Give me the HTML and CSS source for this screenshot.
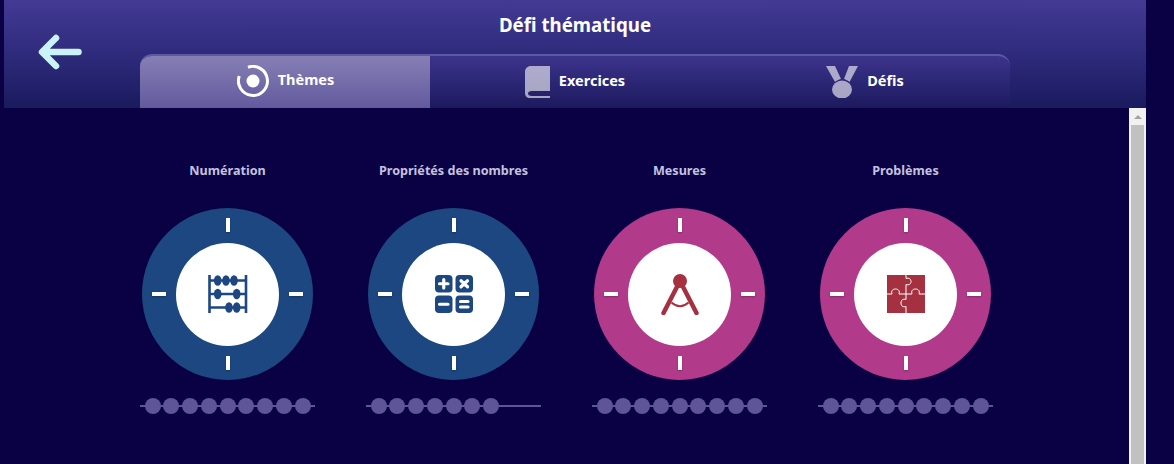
FILE: index.html

```html
<!DOCTYPE html>
<html lang="fr">
<head>
  <meta charset="UTF-8" />
  <title>Défi thématique</title>
  <link rel="stylesheet" href="styles.css">
</head>
<body>
  <div class="page">
    <header class="header">
      <a class="back" href="#" aria-label="Retour">
        <svg width="48" height="38" viewBox="0 0 48 38">
          <path d="M42.500 18H7M20 4L6 18l14 14" fill="none" stroke="#c9f3f8" stroke-width="6.500" stroke-linecap="round" stroke-linejoin="round"/>
        </svg>
      </a>
      <h1 class="title">Défi thématique</h1>
      <nav class="tabs">
        <a class="tab active" href="#">
          <svg width="32" height="32" viewBox="0 0 32 32">
            <path d="M11 2.300A14.500 14.500 0 1 1 2.300 11" fill="none" stroke="#fff" stroke-width="3"/>
            <circle cx="16" cy="16" r="6.500" fill="#fff"/>
          </svg>
          <span>Thèmes</span>
        </a>
        <a class="tab" href="#">
          <svg class="dim" width="25" height="32" viewBox="0 0 25 32">
            <path d="M6 0H25V25H6.500C4.500 25 3 26 3 27.500S4.500 30 6.500 30H25V32H5C2 32 0 30 0 27V6C0 2.500 2.500 0 6 0Z" fill="#fff"/>
          </svg>
          <span>Exercices</span>
        </a>
        <a class="tab" href="#">
          <svg class="dim" width="32" height="32" viewBox="0 0 32 32">
            <path d="M0 0H9L15 13C12.500 13.500 10.500 14.500 9 16ZM32 0H23L18 13C20 13.500 22 14.500 23.500 16Z" fill="#fff"/>
            <ellipse cx="16" cy="23.500" rx="10" ry="9" fill="#fff"/>
          </svg>
          <span>Défis</span>
        </a>
      </nav>
    </header>

    <div class="content">
      <main class="themes">
        <section class="theme">
          <h2>Numération</h2>
          <div class="dial blue">
            <i class="tick top"></i><i class="tick bottom"></i><i class="tick left"></i><i class="tick right"></i>
            <div class="hub">
              <svg width="40" height="38" viewBox="0 0 40 38" fill="#1c4780">
                <path d="M1.500 0V38M38 0V38M1 5.500H38.500M1 19H38.500M1 32.500H38.500" fill="none" stroke="#1c4780" stroke-width="2.600"/>
                <ellipse cx="9.700" cy="5.500" rx="3.800" ry="5.300"/><ellipse cx="18" cy="5.500" rx="3.800" ry="5.300"/><ellipse cx="26" cy="5.500" rx="3.800" ry="5.300"/>
                <ellipse cx="9.700" cy="19" rx="3.800" ry="5.300"/><ellipse cx="28.700" cy="19" rx="3.800" ry="5.300"/>
                <ellipse cx="21" cy="32.500" rx="3.800" ry="5.300"/><ellipse cx="28.700" cy="32.500" rx="3.800" ry="5.300"/>
              </svg>
            </div>
          </div>
          <div class="progress"><b></b><b></b><b></b><b></b><b></b><b></b><b></b><b></b><b></b></div>
        </section>

        <section class="theme">
          <h2>Propriétés des nombres</h2>
          <div class="dial blue">
            <i class="tick top"></i><i class="tick bottom"></i><i class="tick left"></i><i class="tick right"></i>
            <div class="hub">
              <svg width="38" height="38" viewBox="0 0 38 38">
                <rect width="17.500" height="17.500" rx="4" fill="#1c4780"/>
                <rect x="20.500" width="17.500" height="17.500" rx="4" fill="#1c4780"/>
                <rect y="20.500" width="17.500" height="17.500" rx="4" fill="#1c4780"/>
                <rect x="20.500" y="20.500" width="17.500" height="17.500" rx="4" fill="#1c4780"/>
                <path d="M4.500 8.750H13M8.750 4.500V13M26 5.800L32.500 11.800M32.500 5.800L26 11.800M4.500 29.250H13M25.500 26.500H33M25.500 32H33" fill="none" stroke="#fff" stroke-width="3.200" stroke-linecap="round"/>
              </svg>
            </div>
          </div>
          <div class="progress"><b></b><b></b><b></b><b></b><b></b><b></b><b></b></div>
        </section>

        <section class="theme">
          <h2>Mesures</h2>
          <div class="dial pink">
            <i class="tick top"></i><i class="tick bottom"></i><i class="tick left"></i><i class="tick right"></i>
            <div class="hub">
              <svg width="40" height="42" viewBox="0 0 40 42">
                <circle cx="20" cy="8" r="7" fill="#a5303f"/>
                <path d="M20 8L3.500 40M20 8L36.500 40" fill="none" stroke="#a5303f" stroke-width="4.500" stroke-linecap="round"/>
                <path d="M11.500 29.500Q20 37 28.500 29.500" fill="none" stroke="#a5303f" stroke-width="2"/>
              </svg>
            </div>
          </div>
          <div class="progress"><b></b><b></b><b></b><b></b><b></b><b></b><b></b><b></b><b></b></div>
        </section>

        <section class="theme">
          <h2>Problèmes</h2>
          <div class="dial pink">
            <i class="tick top"></i><i class="tick bottom"></i><i class="tick left"></i><i class="tick right"></i>
            <div class="hub">
              <svg width="38" height="38" viewBox="0 0 38 38">
                <rect width="38" height="38" fill="#a5303f"/>
                <path d="M19 0V3.500c3-1 5 .5 5 3s-2 4-5 3V19M19 19v5.500c-3-1-5 .5-5 3.500s2 4.500 5 3.500V38M0 19H5c-1-3 .5-5 3.500-5s4.500 2 3.500 5H19M19 19h6c-1-3 .5-5 3.500-5s4.500 2 3.500 5H38" fill="none" stroke="#fff" stroke-width="1"/>
              </svg>
            </div>
          </div>
          <div class="progress"><b></b><b></b><b></b><b></b><b></b><b></b><b></b><b></b><b></b></div>
        </section>
      </main>

      <div class="scrollbar">
        <span class="arrow"></span>
        <span class="thumb"></span>
      </div>
    </div>
  </div>
</body>
</html>
```

FILE: styles.css

```css
html, body {
  margin: 0;
  height: 100%;
  overflow: hidden;
}
body {
  background-color: #0a0044;
  font-family: "Noto Sans", Arial, sans-serif;
}
.page {
  display: flex;
  flex-direction: column;
  height: 464px;
  margin: 0 28px 0 4px;
}
.header {
  position: relative;
  display: flex;
  flex-direction: column;
  align-items: center;
  height: 108px;
  flex-shrink: 0;
  background: linear-gradient(#433a94, #2f2b7c 50%, #1a1a5e);
}
.back {
  position: absolute;
  left: 32px;
  top: 34px;
  line-height: 0;
}
.title {
  margin: 0;
  height: 54px;
  line-height: 50px;
  font-size: 18.7px;
  font-weight: 700;
  color: white;
}
.tabs {
  display: flex;
  width: 870px;
  height: 54px;
  box-sizing: border-box;
  border-top: 2px solid #5f58a3;
  border-radius: 12px 12px 0 0;
  background: linear-gradient(#3c348c, #1c1a5e);
  overflow: hidden;
}
.tab {
  flex: 0 0 290px;
  box-sizing: border-box;
  display: flex;
  align-items: center;
  justify-content: center;
  gap: 9px;
  padding-bottom: 1px;
  font-size: 14.5px;
  font-weight: 700;
  color: white;
  text-decoration: none;
}
.tab span {
  margin-bottom: 3px;
}
.tab.active {
  margin-top: -2px;
  padding-left: 1px;
  background: linear-gradient(#8781b6, #625a9d);
}
.dim {
  opacity: 0.6;
}
.content {
  flex: 1;
  display: flex;
  min-height: 0;
}
.themes {
  flex: 1;
  display: flex;
  align-items: flex-start;
  padding: 55px 0 0 110.500px;
}
.theme {
  width: 226px;
  display: flex;
  flex-direction: column;
  align-items: center;
}
.theme h2 {
  margin: 0 0 29px;
  height: 16px;
  line-height: 16px;
  font-size: 12.6px;
  font-weight: 700;
  color: #c4c2de;
  white-space: nowrap;
}
.dial {
  position: relative;
  display: flex;
  align-items: center;
  justify-content: center;
  width: 171px;
  height: 172px;
  border-radius: 50%;
}
.dial.blue {
  background-color: #1c4780;
}
.dial.pink {
  background-color: #b13a8b;
}
.hub {
  display: flex;
  align-items: center;
  justify-content: center;
  width: 103px;
  height: 103px;
  border-radius: 50%;
  background: white;
}
.tick {
  position: absolute;
  background: white;
  box-shadow: 0 1px 2px rgba(0, 0, 0, 0.25);
}
.tick.top, .tick.bottom {
  left: 84px;
  width: 3.500px;
  height: 14px;
}
.tick.left, .tick.right {
  top: 84px;
  width: 14px;
  height: 3.500px;
}
.tick.top { top: 10px; }
.tick.bottom { bottom: 10px; }
.tick.left { left: 10px; }
.tick.right { right: 10px; }
.progress {
  display: flex;
  align-items: center;
  gap: 2.750px;
  box-sizing: border-box;
  width: 175px;
  height: 16px;
  margin-top: 18px;
  padding-left: 4.700px;
  background: linear-gradient(#5f5596, #5f5596) center / 100% 2px no-repeat;
}
.progress b {
  width: 16px;
  height: 16px;
  border-radius: 50%;
  background-color: #5f5596;
}
.scrollbar {
  display: flex;
  flex-direction: column;
  align-items: center;
  width: 17px;
  background-color: #f1f1f1;
}
.arrow {
  width: 0;
  height: 0;
  margin: 7px 0 6px;
  border-left: 4px solid transparent;
  border-right: 4px solid transparent;
  border-bottom: 4px solid #a3a3a3;
}
.thumb {
  flex: 1;
  width: 13px;
  background-color: #c1c1c1;
}
```
